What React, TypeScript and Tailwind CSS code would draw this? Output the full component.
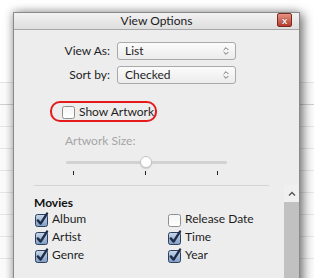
import { ChevronsUpDown } from "lucide-react";

const font = { fontFamily: '"Segoe UI", Lato, "Noto Sans", sans-serif' };

function Check({ checked }: { checked: boolean }) {
  return (
    <svg width="15" height="15" viewBox="0 0 15 15" className="shrink-0">
      <defs>
        <linearGradient id="cbOn" x1="0" y1="0" x2="0" y2="1">
          <stop offset="0" stopColor="#c9d8ea" />
          <stop offset="1" stopColor="#7f9dc2" />
        </linearGradient>
        <linearGradient id="cbOff" x1="0" y1="0" x2="0" y2="1">
          <stop offset="0" stopColor="#f4f4f4" />
          <stop offset="1" stopColor="#ffffff" />
        </linearGradient>
      </defs>
      <rect
        x="1.5"
        y="2.5"
        width="12"
        height="12"
        rx="2"
        fill={checked ? "url(#cbOn)" : "url(#cbOff)"}
        stroke={checked ? "#2d3f5e" : "#8e8e8e"}
      />
      {checked && (
        <path
          d="M3.8 8.4 L6.6 11.6 L13 1.6"
          fill="none"
          stroke="#1f2d4a"
          strokeWidth="2.4"
          strokeLinecap="round"
          strokeLinejoin="round"
        />
      )}
    </svg>
  );
}

function Option({ label, checked }: { label: string; checked: boolean }) {
  return (
    <div className="flex h-[18px] items-center gap-[3px]">
      <Check checked={checked} />
      <span className="text-[12px] text-[#1e1e1e]">{label}</span>
    </div>
  );
}

function Select({ value }: { value: string }) {
  return (
    <div className="flex h-[18px] w-[119px] items-center justify-between rounded-[3px] border border-[#a9a9a9] bg-gradient-to-b from-[#fbfbfb] to-[#ececec] pl-[7px] pr-[4px] text-[12px] text-[#1e1e1e]">
      <span>{value}</span>
      <ChevronsUpDown size={10} strokeWidth={2} className="text-[#555]" />
    </div>
  );
}

export default function App() {
  const stripes = [83, 104, 127, 148, 172, 193, 215, 237, 258];
  return (
    <div className="relative h-[278px] w-[314px] overflow-hidden bg-white" style={font}>
      {/* list rows behind the dialog */}
      <div className="flex flex-col pt-[82px]">
        {stripes.map((y, i) => (
          <div
            key={y}
            className={
              i === 1
                ? "h-[22px] border-t border-[#cfcfcf] bg-[#fbfbfb]"
                : "h-[22px] border-t border-[#e6e6e6] bg-[#fbfbfb]"
            }
          />
        ))}
      </div>

      {/* dialog */}
      <div className="absolute left-[13px] top-[12px] flex h-[300px] w-[287px] flex-col border border-[#8a8a8a] bg-[#ededed] shadow-[3px_2px_10px_rgba(0,0,0,0.55),-2px_-2px_8px_rgba(0,0,0,0.12)]">
        <div className="relative flex h-[17px] items-center justify-center border-b border-[#a8a8a8] bg-gradient-to-b from-[#f2f2f2] to-[#dedede]">
          <span className="text-[12px] text-[#1a1a1a]">View Options</span>
          <div className="absolute right-[7px] top-0 flex h-[14px] w-[15px] items-center justify-center rounded-[2px] border border-[#7a2a22] bg-gradient-to-b from-[#e49383] to-[#b83a2c]">
            <span className="text-[10px] font-bold leading-none text-white [text-shadow:0_0_1px_#5a1a14]">x</span>
          </div>
        </div>

        <div className="flex flex-col gap-[6px] pt-[12px]">
          <div className="flex items-center gap-[7px]">
            <span className="w-[96px] text-right text-[12px] text-[#1e1e1e]">View As:</span>
            <Select value="List" />
          </div>
          <div className="flex items-center gap-[7px]">
            <span className="w-[96px] text-right text-[12px] text-[#1e1e1e]">Sort by:</span>
            <Select value="Checked" />
          </div>
        </div>

        <div className="ml-[36px] mt-[17px] flex h-[21px] w-[107px] items-center gap-[3px] rounded-[10px] border-2 border-[#e41a1c] pl-[9px]">
          <Check checked={false} />
          <span className="text-[12px] text-[#1e1e1e]">Show Artwork</span>
        </div>

        <span className="ml-[51px] mt-[10px] text-[12px] text-[#a5a5a5]">Artwork Size:</span>

        <div className="relative ml-[52px] mt-[6px] h-[14px] w-[161px]">
          <div className="absolute left-0 right-0 top-[5px] h-[3px] rounded-full bg-[#d2d2d2]" />
          <div className="absolute left-[74px] top-0 h-[12px] w-[12px] rounded-full border border-[#c4c4c4] bg-white shadow-[0_1px_1px_rgba(0,0,0,0.15)]" />
        </div>
        <div className="ml-[59px] mt-[1px] flex w-[145px] justify-between">
          <div className="h-[4px] w-px bg-[#222]" />
          <div className="h-[4px] w-px bg-[#222]" />
          <div className="h-[4px] w-px bg-[#222]" />
        </div>

        <div className="mt-[10px] flex flex-1">
          <div className="flex flex-1 flex-col">
            <div className="ml-[20px] mr-[15px] border-t border-[#d4d4d4]" />
            <span className="ml-[20px] mt-[8px] text-[12px] font-bold text-[#111]">Movies</span>
            <div className="ml-[20px] mt-[-2px] grid grid-cols-[133px_1fr]">
              <Option label="Album" checked />
              <Option label="Release Date" checked={false} />
              <Option label="Artist" checked />
              <Option label="Time" checked />
              <Option label="Genre" checked />
              <Option label="Year" checked />
            </div>
          </div>
          <div className="flex w-[15px] flex-col">
            <div className="flex h-[17px] items-center justify-center bg-[#f0f0f0]">
              <svg width="8" height="5" viewBox="0 0 8 5">
                <path d="M1 4.5 L4 1.5 L7 4.5" fill="none" stroke="#555" strokeWidth="1.4" />
              </svg>
            </div>
            <div className="flex-1 bg-[#c1c1c1]" />
          </div>
        </div>
      </div>
    </div>
  );
}
